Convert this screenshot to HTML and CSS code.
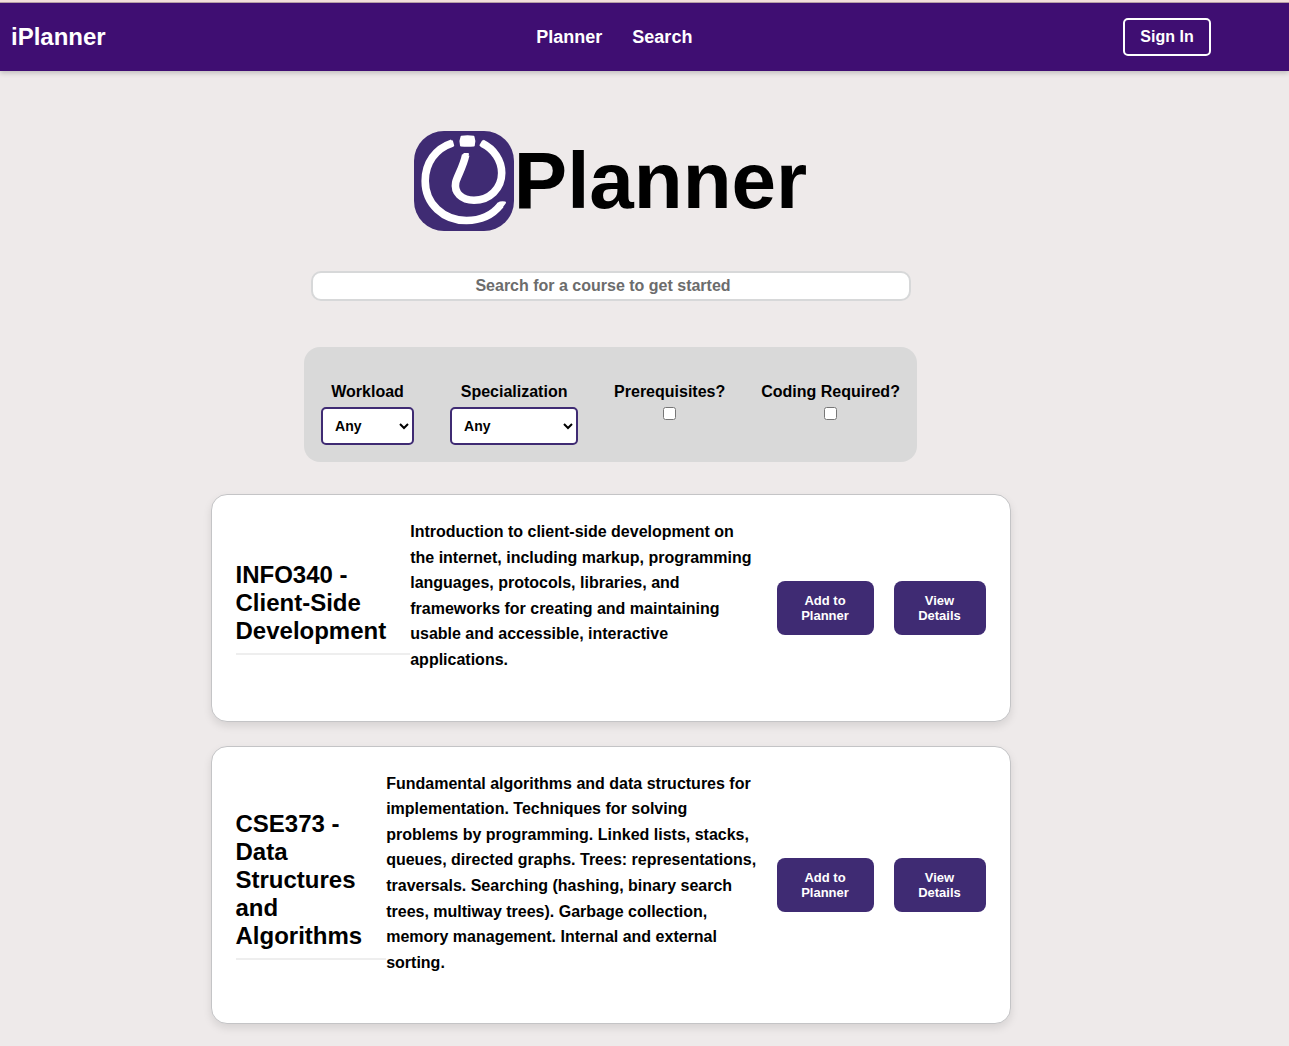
FILE: index.html
```html
<!DOCTYPE html>
<html lang="en">
<head>
  <meta charset="utf-8">
  <meta name="viewport" content="width=device-width, initial-scale=1">
  <title>iPlanner</title>
  <link rel="stylesheet" href="styles.css">
</head>
<body>
  <header class="site-header">
    <a class="brand" href="#">iPlanner</a>
    <nav class="site-nav">
      <a href="#planner">Planner</a>
      <a href="#search">Search</a>
    </nav>
    <button class="sign-in" type="button">Sign In</button>
  </header>

  <main class="page">
    <h1 class="hero">
      <svg class="hero-logo" viewBox="0 0 100 100" aria-hidden="true">
        <rect width="100" height="100" rx="30" fill="#3f2b73"/>
        <g fill="#fff" stroke="#fff" stroke-width="2" stroke-linejoin="round">
          <path d="M47.500 5.800Q53.500 4.600 59.500 5.800Q61.200 10 59.800 14.400Q53.500 15.200 47 14.400Q45.600 10 47.500 5.800Z"/>
          <path d="M38 10.200L39.200 14.500L36 14L35 11.500ZM68.800 10.200L66.500 14.300L70 15L71.500 12ZM50.200 23L54 23L53 26.500L49 26Z"/>
          <path d="M84 72.500Q87 70.800 91 71.600L87.500 76.500L84.500 75Z"/>
        </g>
        <g fill="none" stroke="#fff" stroke-width="7.600">
          <path d="M38.200 12.100C21.500 17.500 11.200 32 11.200 50C11.200 73 29.500 89.500 52.500 89.500C66.500 89.500 78.500 84 86.500 74"/>
          <path d="M68 12.300C80 18 87.700 29.500 87.700 42C87.700 57.500 75.500 69.300 60 69.300C47.500 69.300 39.800 61.500 41.700 51.500C43 45.500 49 36.500 51.700 24"/>
        </g>
      </svg>
      <span>Planner</span>
    </h1>

    <input class="search" type="search" placeholder="Search for a course to get started" aria-label="Search for a course">

    <form class="filters">
      <div class="filter">
        <label for="workload">Workload</label>
        <select class="workload" id="workload">
          <option>Any</option>
          <option>Light</option>
          <option>Heavy</option>
        </select>
      </div>
      <div class="filter">
        <label for="specialization">Specialization</label>
        <select class="specialization" id="specialization">
          <option>Any</option>
          <option>Design</option>
          <option>Software</option>
        </select>
      </div>
      <div class="filter">
        <label for="prerequisites">Prerequisites?</label>
        <input type="checkbox" id="prerequisites">
      </div>
      <div class="filter">
        <label for="coding">Coding Required?</label>
        <input type="checkbox" id="coding">
      </div>
    </form>

    <section class="courses" aria-label="Courses">
      <article class="course">
        <h2>INFO340 - Client-Side Development</h2>
        <p>Introduction to client-side development on the internet, including markup, programming languages, protocols, libraries, and frameworks for creating and maintaining usable and accessible, interactive applications.</p>
        <div class="actions">
          <button type="button">Add to Planner</button>
          <button type="button">View Details</button>
        </div>
      </article>
      <article class="course">
        <h2>CSE373 - Data Structures and Algorithms</h2>
        <p>Fundamental algorithms and data structures for implementation. Techniques for solving problems by programming. Linked lists, stacks, queues, directed graphs. Trees: representations, traversals. Searching (hashing, binary search trees, multiway trees). Garbage collection, memory management. Internal and external sorting.</p>
        <div class="actions">
          <button type="button">Add to Planner</button>
          <button type="button">View Details</button>
        </div>
      </article>
    </section>
  </main>
</body>
</html>
```

FILE: styles.css
```css
* {
  box-sizing: border-box;
}

body {
  margin: 0;
  border-top: 2px solid #f3dfdb;
  background: #eeeaea;
  color: #000;
  font: bold 16px "Liberation Sans", Arial, sans-serif;
}

button,
input,
select {
  margin: 0;
  font: inherit;
}

/* Header */
.site-header {
  display: flex;
  align-items: center;
  justify-content: space-between;
  border-top: 1px solid #b79fa5;
  padding: 15px 78px 15px 11px;
  background: #3f0e72;
  box-shadow: 0 2px 5px rgba(0, 0, 0, 0.2);
}

.site-header a {
  color: #fff;
  text-decoration: none;
}

.brand {
  font-size: 24px;
}

.site-nav {
  display: flex;
  gap: 30px;
  font-size: 18px;
}

.sign-in {
  width: 88px;
  height: 38px;
  padding: 0;
  border: 2px solid #fff;
  border-radius: 5px;
  background: transparent;
  color: #fff;
}

/* Page column */
.page {
  display: flex;
  flex-direction: column;
  align-items: center;
  padding: 60px 68px 24px 0;
}

.hero {
  display: flex;
  margin: 0 0 40px;
  font-size: 80px;
  line-height: 100px;
}

.hero-logo {
  width: 100px;
  height: 100px;
}

.search {
  width: 100%;
  max-width: 600px;
  height: 30px;
  border: 2px solid #d7d8d9;
  border-radius: 10px;
  background: #fff;
  text-align: center;
  appearance: none;
}

.search::placeholder {
  color: #6c6c6c;
}

/* Filters */
.filters {
  display: flex;
  flex-wrap: wrap;
  gap: 36px;
  margin: 46px 0 32px;
  padding: 30px 17px 17px;
  border-radius: 16px;
  background: #d9d9d9;
}

.filter {
  display: flex;
  flex-direction: column;
  align-items: center;
}

.filter label {
  line-height: 30px;
}

.filter select {
  height: 38px;
  padding: 8px;
  border: 2px solid #3f2b73;
  border-radius: 5px;
  background: #fff;
  color: #000;
  font-size: 14px;
}

.workload {
  width: 93px;
}

.specialization {
  width: 128px;
}

/* Course cards */
.courses {
  display: grid;
  gap: 24px;
  width: 100%;
  max-width: 800px;
}

.course {
  display: flex;
  align-items: center;
  padding: 24px;
  border: 1px solid #c4c4c6;
  border-radius: 16px;
  background: #fff;
  box-shadow: 0 4px 8px rgba(0, 0, 0, 0.1);
}

.course h2 {
  width: min-content;
  margin: 0;
  padding: 0 24px 8px 0;
  border-bottom: 2px solid #eee;
  font-size: 24px;
  line-height: 28px;
}

.course p {
  flex: 1;
  margin: 0 20px 24px 0;
  line-height: 1.6;
}

.actions {
  display: grid;
  grid-template-columns: 97px 92px;
  gap: 20px;
}

.actions button {
  padding: 12px 20px;
  border: 0;
  border-radius: 8px;
  background: #3f2b73;
  color: #fff;
  font-size: 13px;
  line-height: 15px;
}
```
